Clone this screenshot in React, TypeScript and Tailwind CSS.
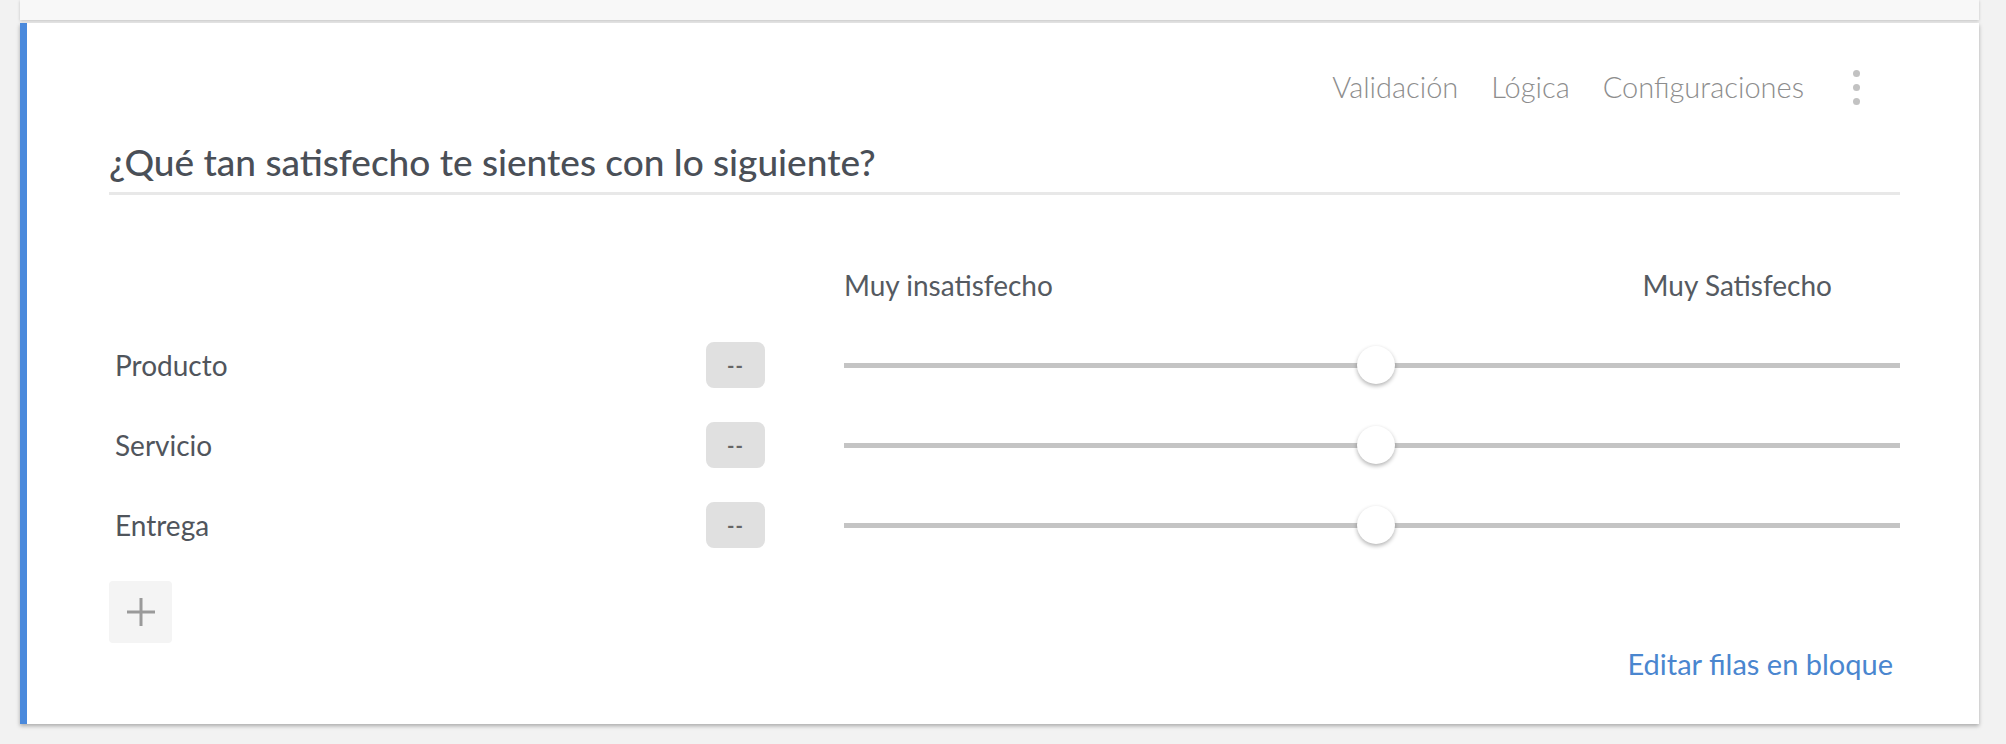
import React from "react";

const rows = ["Producto", "Servicio", "Entrega"];

const Slider: React.FC<{ value: number }> = ({ value }) => (
	<div className="relative flex-1 h-[38px] flex items-center">
		<div className="h-[5px] w-full bg-[#c4c4c4]" />
		<div
			className="absolute top-0 -ml-[19px] w-[38px] h-[38px] rounded-full bg-white shadow-[0_2px_4px_rgba(0,0,0,0.3)]"
			style={{ left: `${value}%` }}
		/>
	</div>
);

const App: React.FC = () => {
	return (
		<div className="min-h-screen bg-[#f2f2f2] pl-[20px] pr-[27px] font-[Lato,sans-serif]">
			<div className="h-[20px] bg-[#f8f8f8] shadow-[0_1px_3px_rgba(0,0,0,0.2)] mb-[3px]" />

			<div className="bg-white border-l-[7px] border-[#4a89dc] shadow-[0_2px_4px_rgba(0,0,0,0.3)] pt-[44px] pb-[40px] pl-[82px] pr-[79px]">
				<div className="flex justify-end items-center h-[40px] gap-[33px] text-[29px] font-light text-[#8d8d8d]">
					<span>Validación</span>
					<span>Lógica</span>
					<span>Configuraciones</span>
					<div className="flex flex-col items-center gap-[7px] w-[24px] ml-[7px] mr-[32px]">
						<span className="w-[7px] h-[7px] rounded-full bg-[#c2c2c2]" />
						<span className="w-[7px] h-[7px] rounded-full bg-[#c2c2c2]" />
						<span className="w-[7px] h-[7px] rounded-full bg-[#c2c2c2]" />
					</div>
				</div>

				<div className="mt-[31px] pb-[6px] border-b-[3px] border-[#e8e8e8]">
					<h2 className="h-[48px] leading-[48px] text-[37px] font-medium text-[#4a4f57]">
						¿Qué tan satisfecho te sientes con lo siguiente?
					</h2>
				</div>

				<div className="mt-[70px] flex h-[40px] items-center text-[28px] text-[#555a61]">
					<div className="w-[735px] shrink-0" />
					<div className="flex flex-1 justify-between pr-[68px]">
						<span>Muy insatisfecho</span>
						<span>Muy Satisfecho</span>
					</div>
				</div>

				<div className="mt-[20px]">
					{rows.map((row) => (
						<div key={row} className="flex items-center h-[80px]">
							<div className="w-[597px] shrink-0 pl-[6px] text-[28px] text-[#50555c]">{row}</div>
							<div className="w-[59px] h-[46px] shrink-0 rounded-[8px] bg-[#e0e0e0] flex items-center justify-center text-[20px] font-bold tracking-[1px] text-[#666]">
								--
							</div>
							<div className="w-[79px] shrink-0" />
							<Slider value={50.4} />
						</div>
					))}
				</div>

				<button className="mt-[16px] w-[63px] h-[62px] rounded-[4px] bg-[#f4f4f4] flex items-center justify-center">
					<svg width="28" height="28" viewBox="0 0 28 28">
						<path d="M14 0v28M0 14h28" stroke="#9a9a9a" strokeWidth="3" />
					</svg>
				</button>

				<div className="mt-[1px] flex justify-end h-[40px] items-center pr-[7px] text-[29px] text-[#4a86cf]">
					Editar filas en bloque
				</div>
			</div>
		</div>
	);
};

export default App;
